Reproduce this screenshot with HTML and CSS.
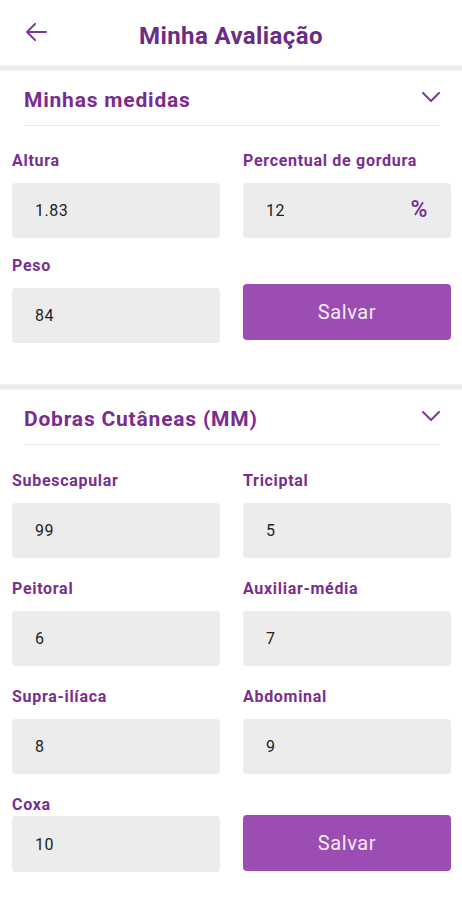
FILE: index.html
```html
<!DOCTYPE HTML>
<html>
<head>
<meta charset="utf-8">
<title>Minha Avaliação</title>
<link rel="stylesheet" href="styles.css">
</head>

<body>
<div class="topbar">
	<a href="javascript:;" class="back">
		<svg width="22" height="18" viewBox="0 0 22 18"><path d="M21 9H2M10 1L2 9l8 8" fill="none" stroke="#7b3a96" stroke-width="2" stroke-linecap="round" stroke-linejoin="round"/></svg>
	</a>
	<h1>Minha Avaliação</h1>
</div>

<div class="band"></div>
<div class="section">
	<div class="sec-head">
		<h2>Minhas medidas</h2>
		<svg width="18" height="10" viewBox="0 0 18 10"><path d="M1 1l8 8 8-8" fill="none" stroke="#7b3a96" stroke-width="2" stroke-linecap="round" stroke-linejoin="round"/></svg>
	</div>
	<div class="grid">
		<div class="field">
			<label>Altura</label>
			<div class="input">1.83</div>
		</div>
		<div class="field">
			<label>Percentual de gordura</label>
			<div class="input">12<span class="unit">%</span></div>
		</div>
		<div class="field">
			<label>Peso</label>
			<div class="input">84</div>
		</div>
		<div class="field btn-cell">
			<button class="save">Salvar</button>
		</div>
	</div>
</div>

<div class="band"></div>
<div class="section">
	<div class="sec-head">
		<h2>Dobras Cutâneas (MM)</h2>
		<svg width="18" height="10" viewBox="0 0 18 10"><path d="M1 1l8 8 8-8" fill="none" stroke="#7b3a96" stroke-width="2" stroke-linecap="round" stroke-linejoin="round"/></svg>
	</div>
	<div class="grid grid2">
		<div class="field">
			<label>Subescapular</label>
			<div class="input">99</div>
		</div>
		<div class="field">
			<label>Triciptal</label>
			<div class="input">5</div>
		</div>
		<div class="field">
			<label>Peitoral</label>
			<div class="input">6</div>
		</div>
		<div class="field">
			<label>Auxiliar-média</label>
			<div class="input">7</div>
		</div>
		<div class="field">
			<label>Supra-ilíaca</label>
			<div class="input">8</div>
		</div>
		<div class="field">
			<label>Abdominal</label>
			<div class="input">9</div>
		</div>
		<div class="field tight">
			<label>Coxa</label>
			<div class="input tall">10</div>
		</div>
		<div class="field btn-cell last">
			<button class="save">Salvar</button>
		</div>
	</div>
</div>
</body>
</html>
```

FILE: styles.css
```css
* {margin:0; padding:0; box-sizing:border-box;}
body {background:#fff; font-family:Roboto, "Noto Sans", sans-serif; width:462px;}

.topbar {height:65px; display:flex; align-items:center; justify-content:center; position:relative;}
.topbar h1 {font-size:24px; font-weight:700; color:#6b2c85; letter-spacing:0.4px; margin-top:6px;}
.back {position:absolute; left:25px; top:23px; display:block; height:18px;}
.back svg {display:block;}

.band {height:6px; background:linear-gradient(#f1f1f1, #e9e9e9 60%, #f3f3f3);}

.section {padding-bottom:41px;}
.sec-head {height:55px; margin:0 22px 0 24px; border-bottom:1px solid #ececec; display:flex; align-items:center; justify-content:space-between;}
.sec-head h2 {font-size:21px; font-weight:700; color:#7a2b90; letter-spacing:0.8px; margin-top:3px;}
.sec-head svg {display:block; margin-top:-2px;}

.grid {display:grid; grid-template-columns:208px 208px; column-gap:23px; row-gap:19px; padding:26px 11px 0 12px;}
.grid2 {row-gap:22px; padding-top:27px;}

.field {display:flex; flex-direction:column;}
.field label {font-size:16px; line-height:18px; font-weight:700; color:#7b2d90; letter-spacing:0.7px; margin-bottom:13px;}
.input {height:55px; background:#ececec; border-radius:4px; display:flex; align-items:center; padding-left:23px; padding-right:23px; font-size:16px; letter-spacing:0.5px; color:#222;}
.unit {margin-left:auto; font-size:23px; font-weight:500; color:#7a2b95; margin-top:-2px;}

.tight label {margin-bottom:2px;}
.tall {height:56px;}

.btn-cell {justify-content:flex-end;}
.save {height:56px; margin-bottom:3px; border:none; border-radius:4px; background:#9c4db3; color:#f6ecf8; font-family:Roboto, "Noto Sans", sans-serif; font-size:20px; letter-spacing:0.6px; font-weight:400; cursor:pointer;}
.last .save {margin-bottom:1px;}
```
